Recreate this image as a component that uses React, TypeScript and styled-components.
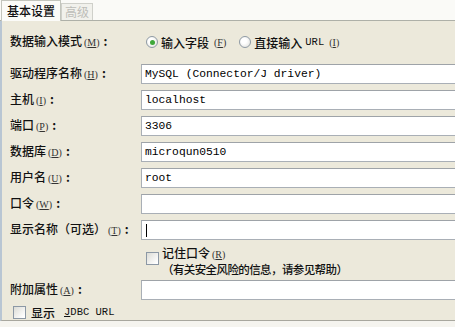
import React from 'react';
import styled, { createGlobalStyle } from 'styled-components';

const Global = createGlobalStyle`
  html, body { margin: 0; padding: 0; background: #f5f4ef; }
  body { font-family: "Noto Sans CJK SC", "Liberation Sans", sans-serif; }
`;

const Window = styled.div`
  width: 455px;
  height: 327px;
  overflow: hidden;
  background: #f5f4ef;
  display: flex;
  flex-direction: column;
`;

const TabStrip = styled.div`
  height: 21px;
  flex: none;
  display: flex;
  align-items: flex-end;
  padding-left: 1px;
  background: #fafaf7;
  border-bottom: 1px solid #aeb0a8;
  box-sizing: border-box;
`;

const Tab = styled.div<{ $active?: boolean }>`
  box-sizing: border-box;
  height: ${p => (p.$active ? '21px' : '17px')};
  margin-bottom: ${p => (p.$active ? '-1px' : '0')};
  padding: 0 ${p => (p.$active ? '5px' : '3px')};
  border: 1px solid ${p => (p.$active ? '#c3c5bd' : '#cfd0ca')};
  border-bottom: ${p => (p.$active ? 'none' : '0')};
  background: ${p => (p.$active ? '#fbfbf8' : '#f1f1ec')};
  color: ${p => (p.$active ? '#111' : '#bdbdb8')};
  font-size: 12px;
  font-weight: ${p => (p.$active ? 500 : 400)};
  line-height: ${p => (p.$active ? '19px' : '16px')};
  white-space: nowrap;
`;

const Panel = styled.div`
  flex: none;
  height: 300px;
  box-sizing: border-box;
  background: #ece9db;
  border-left: 2px solid #b9c6d3;
  border-bottom: 1px solid #a8a79e;
  padding: 11px 0 0 8px;
  display: flex;
  flex-direction: column;
`;

const Row = styled.div<{ $gap?: number }>`
  display: grid;
  grid-template-columns: 131px 340px;
  align-items: center;
  height: 20px;
  margin-top: ${p => p.$gap ?? 6}px;
  &:first-child { margin-top: 0; }
`;

const Label = styled.div`
  font-size: 12px;
  font-weight: 500;
  color: #111;
  white-space: nowrap;
  line-height: 14px;
`;

const Colon = styled.span`
  margin-left: 4px;
  font-weight: 700;
`;

const Mn = styled.span`
  font-family: "Liberation Serif", serif;
  font-size: 10px;
  color: #333;
  margin-left: 2px;
  & u { text-underline-offset: 1px; }
`;

const Field = styled.div`
  box-sizing: border-box;
  height: 20px;
  background: #ffffff;
  border: 1px solid #a9afb6;
  border-top-color: #9ea3a8;
  padding: 0 0 0 3px;
  font-family: "Liberation Mono", monospace;
  font-size: 11.3px;
  line-height: 18px;
  color: #000;
  white-space: nowrap;
  display: flex;
  align-items: center;
`;

const Caret = styled.span`
  display: inline-block;
  width: 1px;
  height: 13px;
  background: #000;
  margin-left: 1px;
`;

const RadioGroup = styled.div`
  display: flex;
  align-items: center;
  gap: 13px;
  padding-left: 5px;
`;

const RadioItem = styled.div`
  display: flex;
  align-items: center;
  gap: 3px;
  font-size: 12px;
  font-weight: 500;
  color: #111;
  white-space: nowrap;
`;

const RadioCircle = styled.span<{ $checked?: boolean }>`
  box-sizing: border-box;
  width: 12px;
  height: 12px;
  border-radius: 50%;
  border: 1px solid #8f9aa5;
  background: radial-gradient(circle at 40% 40%, #ffffff 30%, #dcdcd6 100%);
  display: inline-flex;
  align-items: center;
  justify-content: center;
  &::after {
    content: '';
    display: ${p => (p.$checked ? 'block' : 'none')};
    width: 5px;
    height: 5px;
    border-radius: 50%;
    background: #3fa83a;
  }
`;

const CheckBox = styled.span`
  box-sizing: border-box;
  flex: none;
  width: 13px;
  height: 13px;
  border: 1px solid #8c98a5;
  background: linear-gradient(135deg, #dcdcd6 0%, #ffffff 90%);
`;

const RememberBlock = styled.div`
  margin-top: 6px;
  height: 28px;
  display: flex;
  align-items: flex-start;
  padding-left: 136px;
  gap: 3px;
`;

const RememberBox = styled(CheckBox)`
  margin-top: 6px;
`;

const RememberText = styled.div`
  font-size: 12px;
  font-weight: 500;
  line-height: 14px;
  color: #111;
  white-space: nowrap;
`;

const Hint = styled.div`
  font-size: 11.5px;
  letter-spacing: -0.6px;
`;

const JdbcRow = styled.div`
  margin-top: 5px;
  height: 14px;
  display: flex;
  align-items: center;
  gap: 5px;
  padding-left: 3px;
  font-size: 12px;
  font-weight: 500;
  color: #111;
  white-space: nowrap;
`;

const Mono = styled.span<{ $ml?: number }>`
  font-family: "Liberation Mono", monospace;
  font-size: 10.5px;
  margin-left: ${p => p.$ml ?? 4}px;
`;

const M = ({ k }: { k: string }) => (
  <Mn>(<u>{k}</u>)</Mn>
);

const fields: { label: React.ReactNode; value?: string; caret?: boolean }[] = [
  { label: <>驱动程序名称<M k="H" /><Colon>:</Colon></>, value: 'MySQL (Connector/J driver)' },
  { label: <>主机<M k="I" /><Colon>:</Colon></>, value: 'localhost' },
  { label: <>端口<M k="P" /><Colon>:</Colon></>, value: '3306' },
  { label: <>数据库<M k="D" /><Colon>:</Colon></>, value: 'microqun0510' },
  { label: <>用户名<M k="U" /><Colon>:</Colon></>, value: 'root' },
  { label: <>口令<M k="W" /><Colon>:</Colon></>, value: '' },
  { label: <>显示名称（可选）<M k="T" /><Colon>:</Colon></>, value: '', caret: true },
];

export default function App() {
  return (
    <Window>
      <Global />
      <TabStrip>
        <Tab $active>基本设置</Tab>
        <Tab>高级</Tab>
      </TabStrip>
      <Panel>
        <Row>
          <Label>数据输入模式<M k="M" /><Colon>:</Colon></Label>
          <RadioGroup>
            <RadioItem>
              <RadioCircle $checked />
              输入字段<M k="F" />
            </RadioItem>
            <RadioItem>
              <RadioCircle />
              直接输入 <Mono $ml={0}>URL</Mono><M k="I" />
            </RadioItem>
          </RadioGroup>
        </Row>
        {fields.map((f, i) => (
          <Row key={i} $gap={i === 0 ? 12 : 6}>
            <Label>{f.label}</Label>
            <Field>
              {f.value}
              {f.caret && <Caret />}
            </Field>
          </Row>
        ))}
        <RememberBlock>
          <RememberBox />
          <RememberText>
            记住口令<M k="R" />
            <Hint>（有关安全风险的信息，请参见帮助）</Hint>
          </RememberText>
        </RememberBlock>
        <Row $gap={6}>
          <Label>附加属性<M k="A" /><Colon>:</Colon></Label>
          <Field />
        </Row>
        <JdbcRow>
          <CheckBox />
          显示<Mono><u>J</u>DBC URL</Mono>
        </JdbcRow>
      </Panel>
    </Window>
  );
}
